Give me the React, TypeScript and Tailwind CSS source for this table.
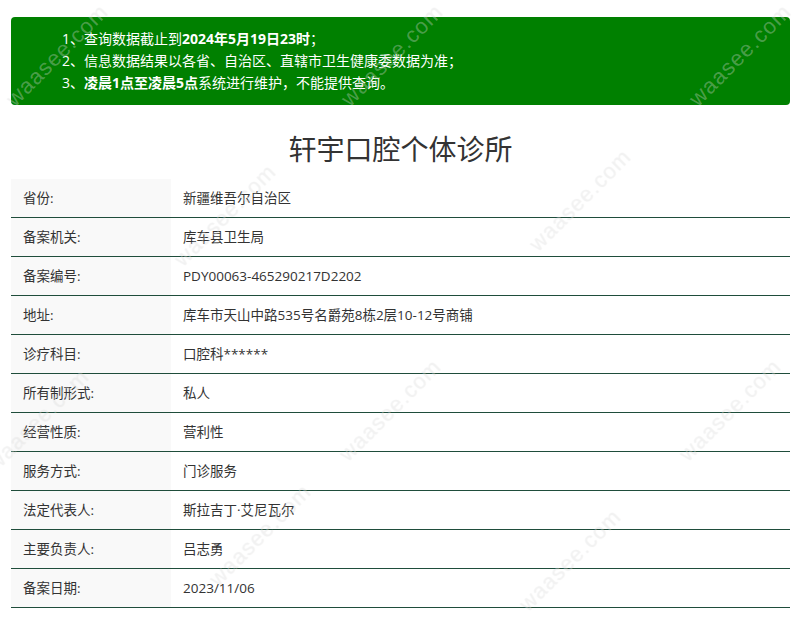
import React from "react";

const rows: [string, string][] = [
  ["省份:", "新疆维吾尔自治区"],
  ["备案机关:", "库车县卫生局"],
  ["备案编号:", "PDY00063-465290217D2202"],
  ["地址:", "库车市天山中路535号名爵苑8栋2层10-12号商铺"],
  ["诊疗科目:", "口腔科******"],
  ["所有制形式:", "私人"],
  ["经营性质:", "营利性"],
  ["服务方式:", "门诊服务"],
  ["法定代表人:", "斯拉吉丁·艾尼瓦尔"],
  ["主要负责人:", "吕志勇"],
  ["备案日期:", "2023/11/06"],
];

// watermark centres, roughly where the site tiles them
const marks: [number, number][] = [
  [57, 55],
  [392, 55],
  [740, 55],
  [580, 200],
  [225, 215],
  [390, 410],
  [730, 410],
  [38, 420],
  [260, 535],
  [570, 560],
];

export default function App() {
  return (
    <div className="relative w-[806px] min-h-[635px] overflow-hidden bg-white font-['Open_Sans','Noto_Sans_CJK_SC',sans-serif] text-[#333]">
      <div className="pl-[11px] pr-[16px] pt-[17px]">
        {/* notice */}
        <div className="rounded-[4px] bg-[#008000] py-[11px] pl-[51px] text-[14px] leading-[22px] text-white">
          <p>
            1、查询数据截止到<b>2024年5月19日23时</b>；
          </p>
          <p>2、信息数据结果以各省、自治区、直辖市卫生健康委数据为准；</p>
          <p>
            3、<b>凌晨1点至凌晨5点</b>系统进行维护，不能提供查询。
          </p>
        </div>

        <h1 className="mt-[24px] mb-[10px] text-center text-[28px] leading-[40px] text-[#333]">
          轩宇口腔个体诊所
        </h1>

        {/* details */}
        <div className="flex flex-col">
          {rows.map(([k, v]) => (
            <div key={k} className="flex h-[39px] border-b border-[#1f4d3b] text-[13.5px]">
              <div className="flex w-[160px] shrink-0 items-center bg-[#f9f9f9] px-3">{k}</div>
              <div className="flex items-center px-3">{v}</div>
            </div>
          ))}
        </div>
      </div>

      {/* watermarks */}
      <div className="pointer-events-none absolute inset-0">
        {marks.map(([x, y], i) => (
          <span
            key={i}
            className="absolute -translate-x-1/2 -translate-y-1/2 -rotate-45 whitespace-nowrap font-['Liberation_Sans',sans-serif] text-[22px] tracking-[1px] text-white/30 [text-shadow:0_0_1px_rgba(0,0,0,0.08)]"
            style={{ left: x, top: y }}
          >
            waasee.com
          </span>
        ))}
      </div>
    </div>
  );
}
